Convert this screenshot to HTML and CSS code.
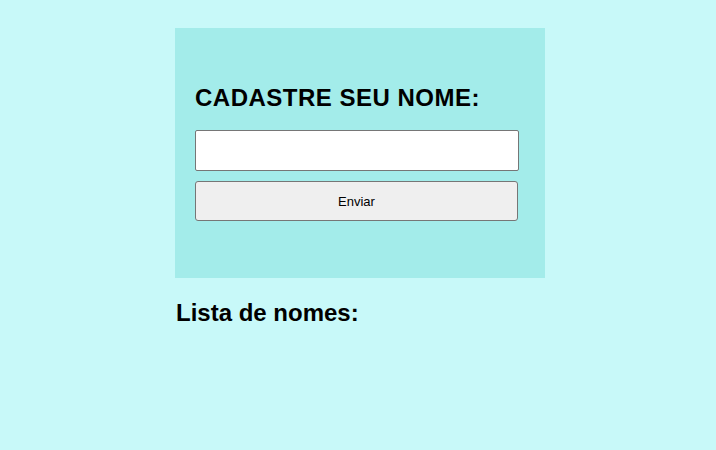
FILE: index.html
```html
<!DOCTYPE html>
<html lang="pt">
<head>
<meta charset="utf-8">
<title>Cadastro</title>
<link rel="stylesheet" href="styles.css">
</head>
<body>
<main class="page">
  <section class="card">
    <h2 class="card-title">CADASTRE SEU NOME:</h2>
    <input class="name-input" type="text">
    <button class="send-btn" type="button">Enviar</button>
  </section>
  <h2 class="list-title">Lista de nomes:</h2>
  <ul class="name-list"></ul>
</main>
</body>
</html>
```

FILE: styles.css
```css
html, body {
  margin: 0;
  padding: 0;
  background: #c8f9f9;
  font-family: "Liberation Sans", Arial, sans-serif;
}

.page {
  width: 370px;
  padding: 28px 0 0 175px;
}

.card {
  background: #a3ecea;
  height: 250px;
  box-sizing: border-box;
  padding: 56px 20px 0 20px;
  display: flex;
  flex-direction: column;
  align-items: flex-start;
}

.card-title {
  margin: 0 0 19px 0;
  font-size: 24px;
  font-weight: bold;
  letter-spacing: 0.5px;
  color: #000;
  line-height: 27px;
}

.name-input {
  width: 324px;
  height: 41px;
  box-sizing: border-box;
  margin: 0;
  border: 1px solid #767676;
  border-radius: 2px;
  background: #fff;
  padding: 0 4px;
  font-size: 13px;
}

.send-btn {
  margin-top: 10px;
  width: 323px;
  height: 40px;
  box-sizing: border-box;
  border: 1px solid #767676;
  border-radius: 3px;
  background: #efefef;
  font-family: "Liberation Sans", Arial, sans-serif;
  font-size: 13px;
  color: #000;
}

.list-title {
  margin: 21px 0 0 1px;
  font-size: 24px;
  font-weight: bold;
  line-height: 27px;
  color: #000;
}

.name-list {
  margin: 0;
  padding: 0;
  list-style: none;
}
```
